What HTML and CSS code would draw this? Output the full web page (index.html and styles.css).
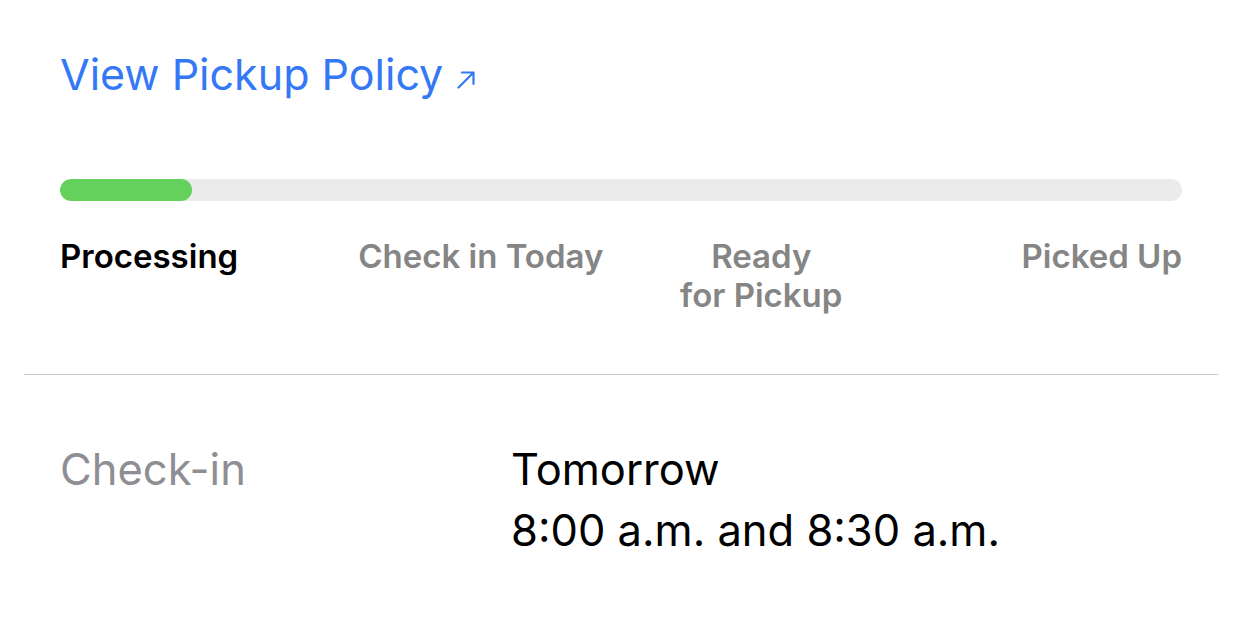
FILE: index.html
```html
<!DOCTYPE html>
<html>
<head>
<meta charset="utf-8">
<link rel="stylesheet" href="styles.css">
</head>
<body>
<main class="page">
  <div class="link-row">
    <a class="policy-link" href="#">View Pickup Policy</a>
    <svg class="ext-icon" width="18" height="18" viewBox="0 0 18 18" aria-hidden="true">
      <path d="M1.5 16.5 L16.5 1.5 M5 1.5 H16.5 V13" fill="none" stroke="#3478f6" stroke-width="2.2" stroke-linecap="round" stroke-linejoin="round"/>
    </svg>
  </div>
  <div class="progress">
    <div class="progress-fill" style="width: 132px"></div>
  </div>
  <div class="steps">
    <div class="step step-first active">Processing</div>
    <div class="step step-mid">Check in Today</div>
    <div class="step step-mid">Ready<br>for Pickup</div>
    <div class="step step-last">Picked Up</div>
  </div>
  <hr class="divider">
  <div class="detail">
    <div class="detail-label">Check-in</div>
    <div class="detail-value">Tomorrow<br>8:00 a.m. and 8:30 a.m.</div>
  </div>
</main>
</body>
</html>
```

FILE: styles.css
```css
html, body {
  margin: 0;
  padding: 0;
  background: #ffffff;
}

body {
  font-family: Inter, "Noto Sans", Roboto, sans-serif;
  color: #000000;
}

.page {
  width: 1242px;
  height: 621px;
  overflow: hidden;
}

.link-row {
  display: flex;
  align-items: baseline;
  gap: 14px;
  padding: 46px 60px 0;
  font-size: 43px;
  line-height: 56px;
}

.policy-link {
  color: #3478f6;
  text-decoration: none;
}

.ext-icon {
  display: block;
  align-self: flex-start;
  margin-top: 25px;
}

.progress {
  margin: 77px 60px 0;
  height: 22px;
  border-radius: 11px;
  background: #ebebeb;
  overflow: hidden;
}

.progress-fill {
  height: 100%;
  border-radius: 11px;
  background: #64d15c;
}

.steps {
  display: grid;
  grid-template-columns: repeat(4, 1fr);
  margin: 36px 60px 0;
  font-size: 33px;
  line-height: 39px;
  font-weight: 600;
  color: #858585;
  height: 78px;
}

.step {
  white-space: nowrap;
}

.step-first { text-align: left; }
.step-mid { text-align: center; }
.step-last { text-align: right; }

.step.active {
  color: #000000;
}

.divider {
  margin: 59px 24px 0;
  border: 0;
  height: 1px;
  background: #cccccc;
}

.detail {
  display: grid;
  grid-template-columns: 451px 1fr;
  margin: 64px 60px 0;
  font-size: 43.5px;
  line-height: 61px;
}

.detail-label {
  color: #8e8e93;
}

.detail-value {
  color: #000000;
}
```
